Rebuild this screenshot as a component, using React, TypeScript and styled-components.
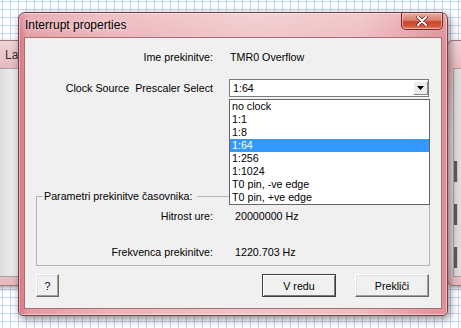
import styled, { createGlobalStyle } from "styled-components";

const GlobalStyle = createGlobalStyle`
  html, body {
    margin: 0;
    padding: 0;
  }
  body {
    font-family: "Liberation Sans", Arial, sans-serif;
    font-size: 10.7px;
    color: #000;
  }
`;

const prescalers = [
    "no clock",
    "1:1",
    "1:8",
    "1:64",
    "1:256",
    "1:1024",
    "T0 pin, -ve edge",
    "T0 pin, +ve edge",
];

export default function App() {
    const selected = "1:64";
    return (
        <Desktop>
            <GlobalStyle />
            <BackWindow $left={-12} $width={44}>
                <BackTitle>La</BackTitle>
                <BackClient />
            </BackWindow>
            <BackWindow $left={447} $width={44}>
                <BackTitle />
                <BackClient $bars>
                    <Slider />
                    <Slider />
                    <Slider />
                </BackClient>
            </BackWindow>

            <Dialog>
                <TitleBar>
                    <Title>Interrupt properties</Title>
                    <CloseButton>
                        <svg width="12" height="10" viewBox="0 0 12 10">
                            <path d="M2 1 L10 9 M10 1 L2 9" stroke="#5a1a12" strokeWidth="3.4" strokeLinecap="round" />
                            <path d="M2 1 L10 9 M10 1 L2 9" stroke="#fff" strokeWidth="2" strokeLinecap="round" />
                        </svg>
                    </CloseButton>
                </TitleBar>

                <Client>
                    <FormGrid>
                        <Label>Ime prekinitve:</Label>
                        <Value>TMR0 Overflow</Value>
                        <Label>Clock Source&nbsp; Prescaler Select</Label>
                        <Combo>
                            <ComboText>{selected}</ComboText>
                            <ComboArrow>
                                <svg width="7" height="4" viewBox="0 0 7 4">
                                    <path d="M0 0 H7 L3.5 4 Z" fill="#000" />
                                </svg>
                            </ComboArrow>
                        </Combo>
                    </FormGrid>

                    <GroupBox>
                        <Legend>Parametri prekinitve časovnika:</Legend>
                        <GroupGrid>
                            <Label>Hitrost ure:</Label>
                            <Value>20000000 Hz</Value>
                            <Label>Frekvenca prekinitve:</Label>
                            <Value>1220.703 Hz</Value>
                        </GroupGrid>
                    </GroupBox>

                    <ButtonRow>
                        <Button $width={23}>?</Button>
                        <Button $width={74} $default>V redu</Button>
                        <Button $width={74}>Prekliči</Button>
                    </ButtonRow>

                    <DropList>
                        {prescalers.map(p => (
                            <DropItem key={p} $active={p === selected}>{p}</DropItem>
                        ))}
                    </DropList>
                </Client>
            </Dialog>
        </Desktop>
    );
}

const Desktop = styled.div`
    position: relative;
    width: 461px;
    height: 328px;
    overflow: hidden;
    background-color: #fdfeff;
    background-image:
        linear-gradient(#c6d6ee 1px, transparent 1px),
        linear-gradient(90deg, #c6d6ee 1px, transparent 1px);
    background-size: 8px 8px;
    background-position: 2px 1px;
`;

const BackWindow = styled.div<{ $left: number; $width: number }>`
    position: absolute;
    top: 40px;
    left: ${({ $left }) => $left}px;
    width: ${({ $width }) => $width}px;
    height: 246px;
    box-sizing: border-box;
    display: flex;
    flex-direction: column;
    border: 1px solid #9c7a7e;
    border-radius: 6px;
    background: linear-gradient(180deg, #efd3d6 0%, #e6b8bd 12%, #e3dcdd 40%, #ddd3d4 90%, #e9b8bd 100%);
    box-shadow: 1px 2px 5px rgba(0, 0, 0, 0.35);
`;

const BackTitle = styled.div`
    height: 27px;
    padding-left: 16px;
    display: flex;
    align-items: center;
    font-size: 12px;
    color: #333;
`;

const BackClient = styled.div<{ $bars?: boolean }>`
    flex: 1;
    margin: 0 5px 8px 5px;
    border: 1px solid #a7a0a1;
    background: linear-gradient(90deg, #d6d6d6, #ececec 60%, #f4f4f4);
    display: flex;
    flex-direction: column;
    gap: 22px;
    padding-top: ${({ $bars }) => ($bars ? 92 : 0)}px;
`;

const Slider = styled.div`
    width: 3px;
    height: 21px;
    background: #5a5a5a;
    border-right: 1px solid #c8c8c8;
`;

const Dialog = styled.div`
    position: absolute;
    left: 18px;
    top: 12px;
    width: 430px;
    height: 304px;
    box-sizing: border-box;
    display: flex;
    flex-direction: column;
    border: 1px solid #704048;
    border-radius: 7px 7px 5px 5px;
    background:
        linear-gradient(180deg, rgba(255, 255, 255, 0.2) 0%, rgba(255, 255, 255, 0) 10%),
        linear-gradient(90deg, #d77280 0%, #e49aa2 2%, #ebb2b7 20%, #f0c6c9 55%, #eebdc1 80%, #e08e97 100%);
    box-shadow: 2px 3px 9px rgba(0, 0, 0, 0.45), inset 0 0 0 1px rgba(255, 255, 255, 0.45);
`;

const TitleBar = styled.div`
    height: 24px;
    display: flex;
    align-items: flex-start;
    padding: 0 4px 0 6px;
`;

const Title = styled.span`
    margin-top: 5px;
    font-size: 12px;
    color: #000;
    text-shadow: 0 0 6px rgba(255, 255, 255, 0.9);
`;

const CloseButton = styled.div`
    margin-left: auto;
    width: 42px;
    height: 17px;
    box-sizing: border-box;
    display: flex;
    align-items: center;
    justify-content: center;
    border: 1px solid #6e2a24;
    border-top: none;
    border-radius: 0 0 5px 5px;
    background: linear-gradient(180deg, #eab0a4 0%, #dc7e6c 45%, #c8442c 55%, #d65a3c 85%, #e48a6a 100%);
    box-shadow: inset 0 0 0 1px rgba(255, 220, 210, 0.55);
`;

const Client = styled.div`
    position: relative;
    flex: 1;
    margin: 0 5px 6px 5px;
    display: flex;
    flex-direction: column;
    padding: 11px 11px 0 11px;
    border: 1px solid #a86f76;
    background: #f0f0f0;
`;

const FormGrid = styled.div`
    display: grid;
    grid-template-columns: 177px 1fr;
    grid-template-rows: 16px 18px;
    column-gap: 16px;
    row-gap: 14px;
    align-items: center;
`;

const Label = styled.span`
    text-align: right;
    white-space: nowrap;
    line-height: 16px;
`;

const Value = styled.span`
    padding-left: 1px;
    white-space: nowrap;
    line-height: 16px;
`;

const Combo = styled.div`
    height: 18px;
    box-sizing: border-box;
    margin-right: 1px;
    display: flex;
    align-items: center;
    border: 1px solid #7a7a7a;
    background: #fff;
`;

const ComboText = styled.span`
    flex: 1;
    padding-left: 3px;
`;

const ComboArrow = styled.div`
    width: 15px;
    height: 14px;
    box-sizing: border-box;
    display: flex;
    align-items: center;
    justify-content: center;
    border: 1px solid;
    border-color: #fff #8a8a8a #8a8a8a #fff;
    background: #ececec;
`;

const GroupBox = styled.fieldset`
    margin: 92px 0 0 0;
    padding: 5px 0 5px 0;
    min-width: 0;
    border: 1px solid #b5b5b5;
    border-radius: 0;
`;

const Legend = styled.legend`
    margin-left: 6px;
    padding: 0 4px 0 1px;
    line-height: 14px;
    font-size: 10.7px;
`;

const GroupGrid = styled.div`
    display: grid;
    grid-template-columns: 176px 1fr;
    grid-auto-rows: 16px;
    column-gap: 21px;
    row-gap: 20px;
    align-items: center;
`;

const ButtonRow = styled.div`
    margin-top: 8px;
    padding-right: 1px;
    display: flex;
    gap: 19px;

    & > :nth-child(2) {
        margin-left: auto;
    }
`;

const Button = styled.div<{ $width: number; $default?: boolean }>`
    width: ${({ $width }) => $width}px;
    height: 23px;
    box-sizing: border-box;
    display: flex;
    align-items: center;
    justify-content: center;
    background: #f0f0f0;
    border: 1px solid;
    border-color: ${({ $default }) => ($default ? "#3c3c3c" : "#fff #696969 #696969 #fff")};
    box-shadow: ${({ $default }) =>
        $default
            ? "inset 1px 1px 0 #fff, inset -1px -1px 0 #7a7a7a"
            : "inset -1px -1px 0 #a0a0a0, inset 1px 1px 0 #e3e3e3"};
`;

const DropList = styled.div`
    position: absolute;
    left: 204px;
    top: 61px;
    width: 201px;
    box-sizing: border-box;
    border: 1px solid #646464;
    background: #fff;
`;

const DropItem = styled.div<{ $active?: boolean }>`
    height: 13px;
    line-height: 13px;
    padding-left: 2px;
    white-space: nowrap;
    background: ${({ $active }) => ($active ? "#3399ff" : "transparent")};
    color: ${({ $active }) => ($active ? "#fff" : "#000")};
`;
